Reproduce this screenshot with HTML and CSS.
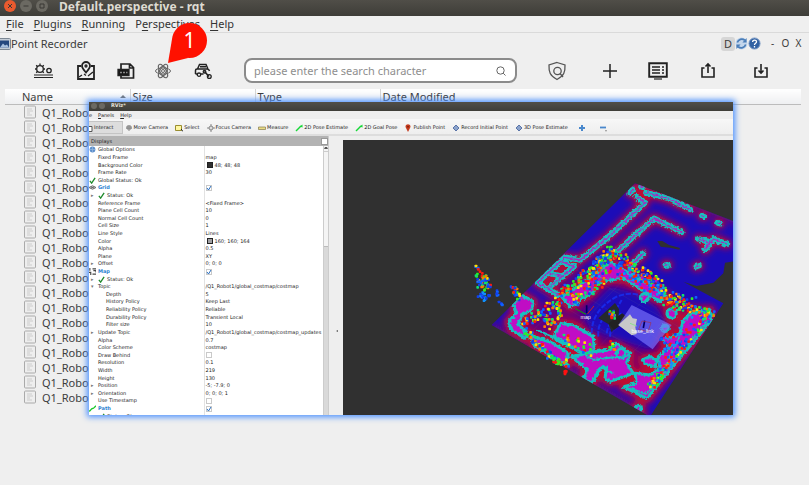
FILE: index.html
```html
<!DOCTYPE html>
<html lang="en">
<head>
<meta charset="utf-8">
<title>Default.perspective - rqt</title>
<link rel="stylesheet" href="styles.css">
</head>
<body>
<header class="titlebar">
  <button class="win close" aria-label="Close"><svg viewBox="0 0 12 12"><path d="M4 4l4 4M8 4l-4 4"/></svg></button>
  <button class="win" aria-label="Minimize"><svg viewBox="0 0 12 12"><path d="M3.500 6h5"/></svg></button>
  <button class="win" aria-label="Maximize"><svg viewBox="0 0 12 12"><path d="M4 4h4v4h-4z"/></svg></button>
  <h1>Default.perspective - rqt</h1>
</header>
<nav class="menubar">
  <a href="#"><u>F</u>ile</a><a href="#"><u>P</u>lugins</a><a href="#"><u>R</u>unning</a><a href="#">P<u>e</u>rspectives</a><a href="#"><u>H</u>elp</a>
</nav>
<div class="dock">
  <svg class="dock-icon" viewBox="0 0 11 12"><rect x="-2" y=".5" width="12.500" height="11" rx="1" fill="#c3ccd6" stroke="#7c8794"/><path d="M0 2.500h9v7H0z" fill="#24477e"/><path d="M0 9.500l3-4 2 2 2-1 2 3z" fill="#a9c1df"/></svg>
  <h2>Point Recorder</h2>
  <button class="dock-d">D</button>
  <button class="dock-round" aria-label="Reload"><svg viewBox="0 0 14 14"><circle cx="7" cy="7" r="6.500" fill="#c3d6ec"/><path d="M2.500 6a5 5 0 0 1 8-2.500M11.500 8a5 5 0 0 1-8 2.500" fill="none" stroke="#4a7db8" stroke-width="1.800"/><path d="M12.500 1v5H8zM1.500 13V8H6z" fill="#4a7db8"/></svg></button>
  <button class="dock-round" aria-label="Help"><svg viewBox="0 0 14 14"><circle cx="7" cy="7" r="6" fill="#3262a3" stroke="#7d9cc6"/><path d="M5 5.500c0-3 4.200-2.600 4.200-.3C9.200 6.800 7 6.800 7 8.500M7 9.800v1.400" fill="none" stroke="#fff" stroke-width="1.400"/></svg></button>
  <button class="dock-txt first">-</button><button class="dock-txt">O</button><button class="dock-txt">X</button>
</div>
<div class="tools">
  <button aria-label="Brightness"><svg viewBox="0 0 20 20"><circle cx="7" cy="8" r="3.300"/><path d="M7 2.500v1.500M2 8h1.500M3.200 4.300l1.200 1.200M10.800 4.300L9.700 5.400M3.200 11.700l1.200-1.200M10.500 8H12M10.800 11.700l-1-1"/><circle cx="16" cy="9.500" r="2.200"/><path d="M1 14h19M1 16.500h19" stroke-width="1.200"/></svg></button>
  <button aria-label="Map point"><svg viewBox="0 0 20 20"><path d="M5 5H2v13h16V5h-3M2 6v11M18 6v11" stroke-width="1.800"/><path d="M10 11.500C7.500 8.500 6 7 6 5a4 4 0 0 1 8 0c0 2-1.500 3.500-4 6.500z" stroke-width="1.800"/><circle cx="10" cy="5" r="1"/><path d="M3 16l3-2M8 13l2 1.500M12 15l5-4"/></svg></button>
  <button aria-label="File"><svg viewBox="0 0 20 20"><path d="M5 8V3h9l3.500 3.500V17H5v-2M13.500 3v4h4" stroke-width="1.700"/><path d="M2 8.500h11v6H2z" fill="#161616"/><path d="M4 11.500h2M7 11.500h2M10 11.500h1.500" stroke="#888"/></svg></button>
  <div class="atom-slot">
    <button aria-label="RViz"><svg class="atom" viewBox="0 0 20 20"><ellipse cx="10" cy="10" rx="7.500" ry="3"/><ellipse cx="10" cy="10" rx="7.500" ry="3" transform="rotate(60 10 10)"/><ellipse cx="10" cy="10" rx="7.500" ry="3" transform="rotate(120 10 10)"/><circle cx="10" cy="10" r="4.500"/><circle cx="10" cy="10" r="1.500"/></svg></button>
    <div class="callout"><svg viewBox="0 0 42 42"><circle cx="23.500" cy="17.500" r="17.500" fill="#f10"/><path d="M2 40L6.200 15 22 35z" fill="#f10"/></svg><span>1</span></div>
  </div>
  <button aria-label="Vehicle"><svg viewBox="0 0 20 20"><path d="M4.500 8l2-4.500h6.500L15 8M2.500 13V9.500Q2.500 8 4 8h10q2 0 2.500 2M2.500 13h2M8 13h2.500M7 5.800h6" stroke-width="1.500"/><circle cx="6" cy="13.700" r="1.700"/><path d="M11.500 10.500l4.500 5" stroke-width="1.700"/><circle cx="11.500" cy="10.800" r="1.300"/><circle cx="16.300" cy="15.500" r="1.900"/></svg></button>
  <label class="search"><input type="text" placeholder="please enter the search character" aria-label="Search"><svg viewBox="0 0 12 12"><circle cx="5.500" cy="5.500" r="3.700"/><path d="M8.200 8.200L10.500 10.500"/></svg></label>
  <button aria-label="Inspect"><svg class="thin" viewBox="0 0 20 20"><path d="M10 1.500L18 4c.3 7-1 11-8 14.500C3 15 1.700 11 2 4z"/><circle cx="10.500" cy="10" r="3.700"/><path d="M13 12.500l3 3.500"/></svg></button>
  <button aria-label="Add"><svg viewBox="0 0 20 20"><path d="M10 3v14M3 10h14" stroke-width="1.500"/></svg></button>
  <button aria-label="List"><svg viewBox="0 0 20 20"><path d="M1.200 2.200h17.600v13.600H1.200z" stroke-width="1.900"/><path d="M4 6h8M4 9h8M4 12h8M14 6h2M14 9h2M14 12h2" stroke-width="1.600"/><path d="M6 18h8" stroke="#555" stroke-width="1.600"/></svg></button>
  <button aria-label="Export"><svg viewBox="0 0 20 20"><path d="M6.500 7H4v9h12V7h-2.500M10 12V3.500M7.500 5.500L10 3l2.500 2.500" stroke-width="1.600"/></svg></button>
  <button aria-label="Import"><svg viewBox="0 0 20 20"><path d="M6.500 7H4v9h12V7h-2.500M10 3v8.500M7.500 9.500L10 12l2.500-2.500" stroke-width="1.600"/></svg></button>
</div>
<main>
  <table class="files">
    <colgroup><col class="c-name"><col class="c-size"><col class="c-type"><col></colgroup>
    <thead><tr><th>Name<i class="sort"></i></th><th>Size</th><th>Type</th><th>Date Modified</th></tr></thead>
    <tbody id="files"></tbody>
  </table>
</main>

<section class="rviz" aria-label="RViz">
  <div class="r-title"><i></i><i></i><h3>RViz*</h3></div>
  <nav class="r-menu"><a href="#">e</a><a href="#"><u>P</u>anels</a><a href="#"><u>H</u>elp</a></nav>
  <div class="r-tools">
    <button class="on"><svg viewBox="4 0 4 8"><path d="M1 2.500h6v5H1z" fill="#fff" stroke="#555"/></svg>Interact</button>
    <button><svg viewBox="0 0 8 8"><path d="M4 1v6M1 4h6M2 2h4v3H2z" fill="#bbb" stroke="#888"/></svg>Move Camera</button>
    <button><svg viewBox="0 0 8 8"><path d="M.5 1.500h6v5h-6z" fill="#fff7a0" stroke="#998d30"/><path d="M6 5l2 2.500" stroke="#222"/></svg>Select</button>
    <button><svg viewBox="0 0 8 8"><path d="M4 0v8M0 4h8" stroke="#888"/><circle cx="4" cy="4" r="2" fill="#ddd" stroke="#888"/></svg>Focus Camera</button>
    <button><svg viewBox="0 0 8 8"><path d="M.5 3h7v2.500h-7z" fill="#e9da83" stroke="#857b4c" stroke-width=".7"/></svg>Measure</button>
    <button><svg viewBox="0 0 8 8"><path d="M1 7l5-5" stroke="#17d838" stroke-width="1.500"/><path d="M7.500.5v3l-3-1z" fill="#17d838"/></svg>2D Pose Estimate</button>
    <button><svg viewBox="0 0 8 8"><path d="M1 7l5-5" stroke="#17d838" stroke-width="1.500"/><path d="M7.500.5v3l-3-1z" fill="#17d838"/></svg>2D Goal Pose</button>
    <button><svg viewBox="0 0 8 8"><path d="M4 8L2 4a2.400 2.400 0 1 1 4 0z" fill="#c43b1e"/><circle cx="4" cy="2.800" r=".8" fill="#6a1505"/></svg>Publish Point</button>
    <button><svg viewBox="0 0 8 8"><path d="M4 1L7 4 4 7 1 4z" fill="#8ba3cc" stroke="#5a74a8"/></svg>Record Initial Point</button>
    <button><svg viewBox="0 0 8 8"><path d="M4 1L7 4 4 7 1 4z" fill="#8ba3cc" stroke="#5a74a8"/></svg>3D Pose Estimate</button>
    <button class="sign" aria-label="Add tool"><svg viewBox="0 0 8 8"><path d="M4 1v6M1 4h6" stroke="#4a88cc" stroke-width="2"/></svg></button>
    <button class="sign" aria-label="Remove tool"><svg viewBox="0 0 8 8"><path d="M1 3.500h6" stroke="#4a88cc" stroke-width="1.800"/><path d="M6 6.500h2l-1 1z" fill="#333"/></svg></button>
  </div>
  <div class="r-body">
    <div class="panel">
      <div class="panel-head"><span>Displays</span><button aria-label="Close panel"></button></div>
      <div class="panel-body">
        <table class="props"><colgroup><col class="p-name"><col></colgroup><tbody id="props"></tbody></table>
        <div class="scroll"><i></i><b></b></div>
      </div>
    </div>
    <div class="split"><i></i></div>
    <svg class="view" viewBox="-321 -90 1170 825" preserveAspectRatio="xMinYMin slice" role="img" aria-label="Costmap">
      <defs>
        <filter id="blur" x="-20%" y="-20%" width="140%" height="140%"><feGaussianBlur stdDeviation="9"/></filter>
        <filter id="rough" filterUnits="userSpaceOnUse" x="100" y="0" width="800" height="760"><feTurbulence type="fractalNoise" baseFrequency=".12" numOctaves="2" seed="4"/><feDisplacementMap in="SourceGraphic" scale="12" xChannelSelector="R" yChannelSelector="G"/></filter>
        <clipPath id="floor"><path d="M125 465L555 40 880 165V270L825 278 820 310 790 338 740 348 700 335 820 400 600 740z"/></clipPath>
        <g id="lines">
          <path d="M595 70L655 85 720 118M560 80L585 98 540 140 470 205 390 270 345 262M695 187L612 145 500 245M745 207L775 215 765 240 790 207 830 222M580 250L545 285M547 58l-6 12M573 50l6 2M585 68l20 4M756 137l5 2M804 159l6 2M646 285l8 0M739 290l8-3M345 262L262 338 325 375M372 290L300 350M335 275L372 290M300 310l40 10"/>
        </g>
        <g id="rooms">
          <path d="M335 380L420 325 480 275 530 305 600 345 650 380 630 395 560 350 520 325 480 330 445 335 430 365 360 410z"/>
          <path d="M215 375L250 395 245 420 215 435 205 465 240 495 225 505 185 480 175 455 198 430 190 400z"/>
          <path d="M330 460L370 465 430 500 432 535 408 555 340 520 310 505z"/>
          <path d="M240 495L310 520 355 550 350 585 310 560 250 525z"/>
          <path d="M365 560L430 545 480 540 500 520 540 550 530 580 550 610 480 635 465 625 470 590 450 595 425 640 400 625 412 600z"/>
          <path d="M780 420L785 450 590 685 520 650 560 640 555 610 600 615 630 595 625 560 660 530 640 510 690 490 700 450 725 430z"/>
          <path d="M600 560l20 10-5 20-30-8-8-12z"/>
          <circle cx="583" cy="383" r="12"/><circle cx="665" cy="430" r="14"/><circle cx="645" cy="475" r="10"/><circle cx="565" cy="715" r="9"/><circle cx="513" cy="550" r="14"/>
        </g>
      </defs>
      <rect x="-321" y="-90" width="2400" height="1800" fill="#303030"/>
      <g clip-path="url(#floor)">
        <path class="base" d="M0 0h900v800H0z"/>
        <path class="haze" d="M180 460L480 270 640 370 790 420 600 700z"/>
        <g class="edge"><path d="M125 465L600 740M555 40L880 165"/></g>
        <g class="glow"><use href="#lines"/><use href="#rooms"/></g>
        <path class="deep" d="M400 430L480 350 560 370 620 410 650 460 600 540 480 500 420 480z"/>
        <g class="grid"><path d="M200 400L560 620M260 360L640 590M320 330L700 550M380 300L740 500M300 560L520 330M380 600L600 370M460 640L680 410M220 510L440 290"/></g>
        <g filter="url(#rough)"><use href="#rooms" class="room"/><use href="#lines" class="cyan"/><use href="#lines" class="core"/><path class="seam" d="M260 480L345 515 430 570 500 560M450 590L490 610M590 670L770 455M540 655L590 672 M690 500L640 600"/></g>
        <path fill="#303030" d="M622 213l15 0 20 12 33 9-2 5-28-6-28-3z"/>
        <path class="arc" d="M425 490q0-70 75-110 40-15 65-5M445 500q-5-60 60-85M470 490q5-40 45-60M480 500l5-60 30-50"/>
        <path fill="#252a2b" d="M445 445l50-46 12 18-2 40-20 30-10-25z"/>
        <path fill="#222" d="M476 460l40-30 15 10-25 30-15 10z"/>
        <path fill="#7d75ff" fill-opacity=".65" d="M545 405L665 465 608 538 505 465z"/>
        <path fill="#c8c8ca" d="M505 465l35-32 8 12 13 2-5 25 4 20-15 4z"/>
      </g>
      <g id="dots"></g>
      <g fill="none" stroke-width="3"><path d="M376 416l32 17" stroke="#0a0"/><path d="M412 432l20-24" stroke="#c22"/><path d="M410 430v-24M584 452l-4 22" stroke="#006" stroke-width="5"/><path d="M566 478l10-25 27 5-9 27z" stroke="#a03050" stroke-width="2"/><path d="M540 460l20 8" stroke="#8fe08f"/></g>
      <text x="407" y="446">map</text><text x="578" y="490">base_link</text>
    </svg>
  </div>
</section>
<script src="app.js"></script>
</body>
</html>
```
FILE: styles.css
```css
* { box-sizing: border-box; }
body { margin: 0; min-height: 100vh; background: #efefef; color: #3c3c3c; font: 11px/15px "Noto Sans", "Open Sans", sans-serif; position: relative; overflow: hidden; }
button { border: 0; background: none; padding: 0; margin: 0; font: inherit; color: inherit; display: flex; align-items: center; justify-content: center; }
a { color: inherit; text-decoration: none; }
h1, h2, h3 { margin: 0; font: inherit; }
svg { display: block; fill: none; }
u { text-underline-offset: 2px; }

.titlebar { height: 16px; display: flex; align-items: center; gap: 4px; padding: 0 4px 4px; background: linear-gradient(#504e48, #3e3d38); color: #dedbd2; }
.titlebar h1 { font-weight: bold; font-size: 12px; margin-left: 7px; }
.win { width: 12px; height: 12px; border-radius: 50%; background: #6b6962; }
.win svg { width: 12px; stroke: #3a3935; stroke-width: 1; }
.win.close { background: #ea5a2e; }
.menubar { height: 17px; display: flex; gap: 10px; padding: 0 6px; border-bottom: 1px solid #dadada; color: #333; }
.dock { height: 21px; display: flex; align-items: center; padding: 0 4px 0 0; }
.dock-icon { width: 11px; height: 12px; }
.dock h2 { flex: 1; }
.dock-d { width: 14px; height: 14px; background: #d6d6d6; border-radius: 3px; }
.dock-round svg { width: 13px; height: 13px; }
.dock-txt { width: 13px; font-size: 10px; }
.dock-txt.first { margin-left: 5px; }

.tools { height: 33px; margin-bottom: 2px; display: grid; grid-template-columns: 42px 43px 38px 36px 44px 1fr 55px 51px 46px 53px 54px; align-items: center; justify-items: center; padding: 0 21px 0 22px; }
.tools button svg { width: 20px; height: 20px; stroke: #222; stroke-width: 1.300; }
.tools button .atom { stroke: #666; stroke-width: 1; }
.tools button .thin { stroke: #555; }
.search { justify-self: stretch; margin: 0 12px 0 19px; height: 25px; display: flex; align-items: center; border: 2px solid #8b8b8b; border-radius: 8px; background: #fff; padding: 0 8px; }
.search input { flex: 1; min-width: 0; border: 0; padding: 0; background: none; font: 11px/15px "Noto Sans", sans-serif; outline: 0; }
.search input::placeholder { color: #8e8e8e; }
.search svg { width: 12px; height: 12px; stroke: #666; }
.atom-slot { position: relative; }
.callout { position: absolute; left: 13px; top: -38px; width: 42px; height: 42px; }
.tools .callout svg { width: 42px; height: 42px; }
.callout span { position: absolute; left: 0; top: 5px; width: 47px; text-align: center; color: #fff; font-size: 21px; line-height: 24px; }

.files { width: calc(100% - 13px); margin-left: 5px; border-collapse: collapse; table-layout: fixed; }
.c-name { width: 125px; } .c-size { width: 125px; } .c-type { width: 125px; }
.files th { height: 15px; padding: 0 2px; line-height: 13px; text-align: left; font-weight: normal; background: linear-gradient(#fff, #eeeff1); border-right: 1px solid #d5d5d5; border-bottom: 1px solid #bcbcbc; }
.files th:first-child { padding-left: 17px; }
.files th:last-child { border-right: 0; }
.sort { float: right; margin: 5px 2px 0; border: 3px solid transparent; border-top: 0; border-bottom: 3px solid #777; }
.files td { height: 15px; padding: 0; }
.files td div { display: flex; align-items: center; gap: 6px; padding-left: 19px; height: 15px; white-space: nowrap; }
.files td svg { width: 12px; height: 14px; }

.rviz { position: absolute; left: 89px; right: 76px; top: 102px; height: 313px; display: flex; flex-direction: column; overflow: hidden; background: #eee; color: #222; font: 5px/7px "DejaVu Sans", sans-serif; box-shadow: 0 0 6px 2px #4a90ff; }
.r-title { flex: 0 0 9px; display: flex; align-items: center; gap: 2px; padding: 0 2px 2px; background: linear-gradient(#504e48, #3e3d38); color: #e4e1d8; }
.r-title i { width: 6px; height: 6px; border-radius: 50%; background: #6b6962; }
.r-title h3 { font-weight: bold; margin-left: 4px; }
.r-menu { flex: 0 0 8px; display: flex; align-items: flex-end; gap: 6px; }
.r-menu u { text-underline-offset: 1px; }
.r-tools { flex: 0 0 17px; display: flex; align-items: center; padding-top: 2px; background: linear-gradient(#f7f7f7, #eee); border-bottom: 2px solid #ddd; white-space: nowrap; gap: 7px; }
.r-tools button { height: 13px; gap: 1px; }
.r-tools .on { background: #ddd; border: 1px solid #c4c4c4; border-left: 0; padding-right: 8px; margin-right: -5px; }
.r-tools svg { width: 8px; height: 8px; flex: none; }
.r-tools .on svg { width: 4px; }
.r-tools .sign { width: 14px; }
.r-body { flex: 1; min-height: 0; display: flex; }
.panel { width: 240px; display: flex; flex-direction: column; border-right: 1px solid #ccc; }
.panel-head { flex: 0 0 10px; display: flex; align-items: center; justify-content: space-between; background: #b3b3b3; padding-left: 2px; }
.panel-head button { width: 7px; height: 7px; background: #fff; border: 1px solid #999; }
.panel-body { flex: 1; min-height: 0; display: flex; overflow: hidden; background: #fff; }
.props { width: 234px; height: 274px; border-collapse: collapse; table-layout: fixed; }
.p-name { width: 115px; }
.props td { padding: 0 0 0 1px; white-space: nowrap; overflow: hidden; }
.props td:first-child { border-right: 1px solid #e2e2e2; padding: 0; }
.cell { display: flex; align-items: center; height: 7px; }
.cell svg { width: 7px; height: 7px; flex: none; margin-right: 2px; }
.arrow { width: 9px; flex: none; padding-left: 2px; color: #777; }
.in { margin-left: 8px; }
.display { color: #2a7fd0; font-weight: bold; }
.props input { appearance: none; width: 6px; height: 6px; margin: 0; border: 1px solid #c9c9c9; background: #fff; }
.tick { position: relative; display: flex; }
.tick svg { position: absolute; left: 0; top: 0; width: 6px; height: 6px; }
.swatch { width: 6px; height: 6px; border: 1px solid #222; margin: 0 2px 0 1px; }
.dark { background: #303030; } .gray { background: #a0a0a4; }
.scroll { flex: 1; background: #d9d9d9; border-left: 1px solid #ccc; }
.scroll i { display: block; height: 6px; background: #f4f4f4; border-bottom: 1px solid #ccc; }
.scroll i::before { content: ""; display: block; width: 2px; margin: 0 auto; border: 1px solid transparent; border-bottom: 2px solid #555; }
.scroll b { display: block; height: 95px; background: #f4f4f4; border-bottom: 1px solid #bbb; }
.split { width: 14px; display: flex; align-items: center; justify-content: center; padding-top: 110px; }
.split i { border: 1px solid transparent; border-right: 2px solid #555; }
.view { flex: 1; min-width: 0; height: auto; margin-top: 4px; }
.view text { fill: #fff; font: 16px "Liberation Sans", sans-serif; text-anchor: middle; }
.base { fill: #1c0cb8; }
.haze { fill: #63067e; filter: url(#blur); }
.edge { fill: none; stroke: #7a1060; stroke-width: 14; filter: url(#blur); }
.glow { fill: none; stroke: #c00830; stroke-width: 30; stroke-linecap: round; stroke-linejoin: round; filter: url(#blur); }
.deep { fill: #1c08b8; filter: url(#blur); }
.grid { stroke: #777; stroke-width: 1; opacity: .35; fill: none; }
.room { fill: #c010c4; stroke: #15c0c0; stroke-width: 9; stroke-linejoin: round; }
.cyan { fill: none; stroke: #15c0c0; stroke-width: 17; stroke-linecap: round; stroke-linejoin: round; }
.core { fill: none; stroke: #a828c0; stroke-width: 4; stroke-linecap: round; }
.seam { fill: none; stroke: #15c0c0; stroke-width: 6; }
.arc { fill: none; stroke: #1830f4; stroke-width: 6; stroke-dasharray: 16 5; opacity: .8; }
```
FILE: app.js
```js
const fileIcon = '<svg viewBox="0 0 12 14"><rect x=".5" y="1" width="11" height="12" rx="1" fill="#eee" stroke="#aaa"/><path d="M3 4h5M3 6h6M3 8h3M3 10h5" stroke="#ccc"/></svg>';
document.getElementById('files').innerHTML = Array.from({ length: 20 }, () =>
  `<tr><td colspan="4"><div>${fileIcon}Q1_Robot</div></td></tr>`).join('');

const icons = {
  ok: '<svg viewBox="0 0 8 8"><path d="M1 4.500l2 2.500 4-6" stroke="#1f8a2c" stroke-width="1.500"/></svg>',
  globe: '<svg viewBox="0 0 8 8"><circle cx="4" cy="4" r="3.300" fill="#5d8fcc"/><path d="M4 1v6M1 4h6" stroke="#8fb2dc"/></svg>',
  grid: '<svg viewBox="0 0 8 8"><path d="M0 4l4-2 4 2-4 2zM2 3l4 2M6 3L2 5" fill="#ccc" stroke="#666"/></svg>',
  map: '<svg viewBox="0 0 8 8"><path d="M1 0v3M0 5h2v3M4 1h4M5 3h3v2M4 7h4" stroke="#444" stroke-width="1.300"/></svg>',
  path: '<svg viewBox="0 0 8 8"><path d="M0 7c2 0 2-3 4-3s2-2 4-3" stroke="#18c828" stroke-width="1.500"/></svg>'
};
// [name, value, marker, icon, indent, isDisplay]
const rows = [
  ['Global Options', '', '', 'globe'], ['Fixed Frame', 'map'], ['Background Color', '@dark 48; 48; 48'], ['Frame Rate', '30'],
  ['Global Status: Ok', '', '', 'ok'], ['Grid', '+', '', 'grid', 0, 1], ['Status: Ok', '', '▸', 'ok', 1],
  ['Reference Frame', '&lt;Fixed Frame&gt;'], ['Plane Cell Count', '10'], ['Normal Cell Count', '0'], ['Cell Size', '1'],
  ['Line Style', 'Lines'], ['Color', '@gray 160; 160; 164'], ['Alpha', '0.5'], ['Plane', 'XY'], ['Offset', '0; 0; 0', '▸'],
  ['Map', '+', '', 'map', 0, 1], ['Status: Ok', '', '▸', 'ok', 1], ['Topic', '/Q1_Robot1/global_costmap/costmap', '▾'],
  ['Depth', '5', '', '', 1], ['History Policy', 'Keep Last', '', '', 1], ['Reliability Policy', 'Reliable', '', '', 1],
  ['Durability Policy', 'Transient Local', '', '', 1], ['Filter size', '10', '', '', 1],
  ['Update Topic', '/Q1_Robot1/global_costmap/costmap_updates', '▸'], ['Alpha', '0.7'], ['Color Scheme', 'costmap'],
  ['Draw Behind', '-'], ['Resolution', '0.1'], ['Width', '219'], ['Height', '130'], ['Position', '-5; -7.9; 0', '▸'],
  ['Orientation', '0; 0; 0; 1', '▸'], ['Use Timestamp', '-'], ['Path', '+', '', 'path', 0, 1], ['Status: Ok', '', '▸', 'ok', 1]
];
const tick = '<svg viewBox="0 0 6 6"><path d="M1 3l1.500 2L5 1" stroke="#2a6fc0"/></svg>';
document.getElementById('props').innerHTML = rows.map(([name, value, arrow, icon, indent, display], i) => {
  const lead = icon && !indent ? icons[icon] : `<span class="arrow">${arrow || ''}</span>` + (icon ? icons[icon] : '');
  const label = `<label for="p${i}" class="${display ? 'display' : ''}">${name}</label>`;
  const pad = indent && !icon ? '<span class="in"></span>' : '';
  let v = value;
  if (value === '+' || value === '-') v = `<span class="tick"><input type="checkbox" id="p${i}"${value === '+' ? ' checked' : ''}>${value === '+' ? tick : ''}</span>`;
  else if (value[0] === '@') v = `<i class="swatch ${value.slice(1, 5)}"></i>${value.slice(6)}`;
  const text = /^[+-]$/.test(value) ? label : `<span>${name}</span>`;
  return `<tr><td><div class="cell">${lead}${pad}${text}</div></td><td><div class="cell">${v}</div></td></tr>`;
}).join('');

// Laser points: bands of coloured squares between two points [x1, y1, x2, y2, spread, count, palette]
let seed = 7;
const rnd = () => (seed = (seed * 16807) % 2147483647) / 2147483647;
const hot = ['#ff1a10', '#ff7a00', '#ffe000', '#30f020', '#10e070', '#1060ff', '#1040f0'];
const cool = ['#1040f0', '#1060ff', '#1090ff', '#c010c4', '#ff2010'];
const bands = [
  [340, 375, 480, 250, 14, 120, hot], [370, 390, 470, 310, 20, 50, hot], [480, 245, 640, 350, 16, 110, hot],
  [500, 290, 640, 370, 20, 70, cool], [430, 340, 520, 290, 20, 25, cool],
  [85, 310, 105, 340, 16, 26, hot], [95, 335, 110, 350, 16, 22, hot], [90, 372, 112, 385, 9, 18, cool.slice(0, 3)],
  [74, 286, 86, 298, 3, 5, hot], [142, 360, 142, 382, 2, 5, cool.slice(0, 2)], [148, 398, 166, 412, 2, 5, cool.slice(0, 2)],
  [187, 345, 208, 385, 8, 26, hot], [225, 460, 330, 395, 13, 50, hot], [325, 400, 330, 450, 7, 20, hot],
  [270, 440, 320, 470, 18, 24, hot], [220, 480, 325, 580, 11, 55, hot], [340, 505, 430, 550, 18, 22, hot],
  [300, 565, 350, 580, 10, 14, hot], [346, 590, 348, 610, 4, 8, ['#f11']], [640, 370, 730, 400, 16, 40, hot],
  [650, 400, 785, 430, 14, 55, hot], [780, 430, 600, 655, 12, 90, hot], [720, 460, 640, 600, 20, 50, cool],
  [640, 500, 660, 540, 14, 20, cool], [482, 420, 492, 445, 7, 14, hot], [480, 520, 495, 540, 8, 8, hot]
];
let out = '';
for (const [x1, y1, x2, y2, w, n, pal] of bands) {
  for (let i = 0; i < n; i++) {
    const t = rnd();
    const x = x1 + (x2 - x1) * t + (rnd() * 2 - 1) * w;
    const y = y1 + (y2 - y1) * t + (rnd() * 2 - 1) * w;
    out += `<rect x="${Math.round(x) - 4}" y="${Math.round(y) - 4}" width="8" height="8" rx="2" fill="${pal[Math.floor(rnd() * pal.length)]}"/>`;
  }
}
document.getElementById('dots').innerHTML = out;
```
